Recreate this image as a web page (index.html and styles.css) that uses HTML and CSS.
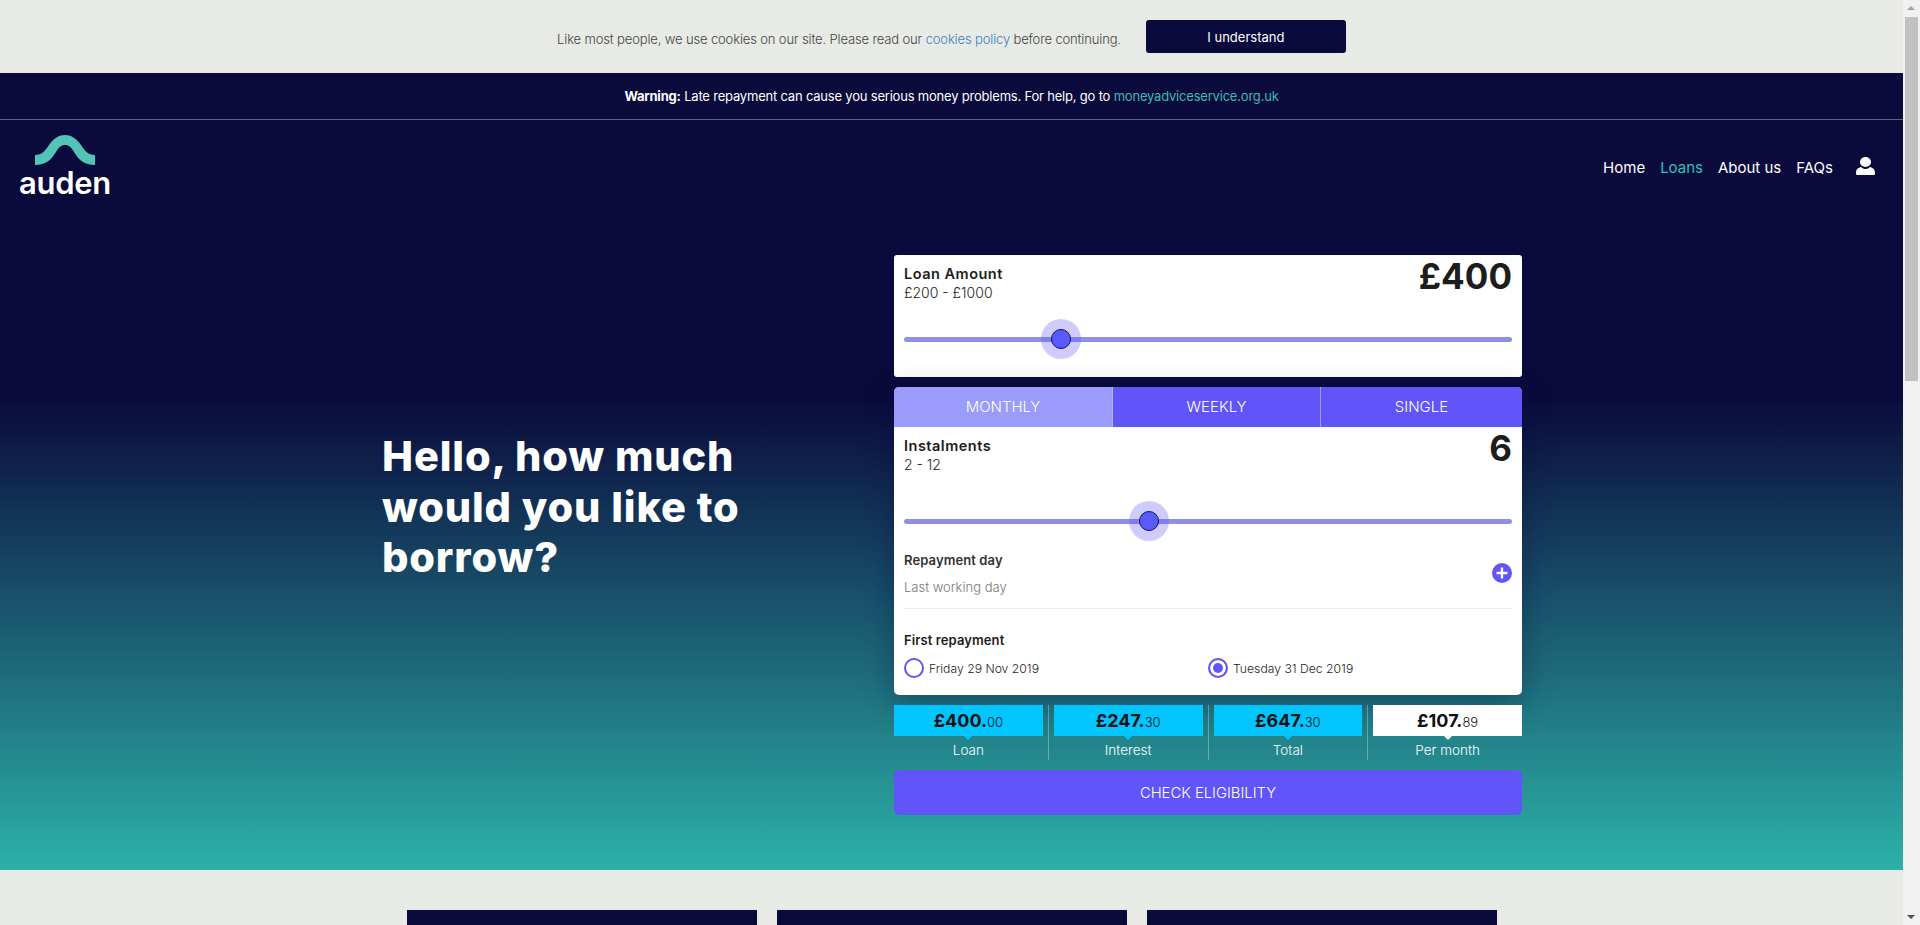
FILE: index.html
```html
<!DOCTYPE html>
<html lang="en">

<head>
    <meta charset="UTF-8">
    <meta name="viewport" content="width=device-width, initial-scale=1.0">
    <title>Auden - Loans</title>
    <link rel="stylesheet" href="styles.css">
</head>

<body>
    <div class="page">
        <!-- Cookie notice -->
        <div class="cookie-bar">
            <p class="cookie-text">Like most people, we use cookies on our site. Please read our <a class="cookie-link" href="#">cookies policy</a> before continuing.</p>
            <button class="cookie-button">I understand</button>
        </div>

        <!-- Warning strip -->
        <div class="warning-bar">
            <p class="warning-text"><strong>Warning:</strong> Late repayment can cause you serious money problems. For help, go to <a class="warning-link" href="#">moneyadviceservice.org.uk</a></p>
        </div>

        <div class="hero">
            <div class="nav">
                <a class="logo" href="#">
                    <svg class="logo-arch" viewBox="0 0 60 30" width="60" height="30">
                        <path d="M0 30V20C7 20 10 16 14 10C19 3 24 0 30 0C36 0 41 3 46 10C50 16 53 20 60 20V30C49 30 44 25 39 17C36 12 34 10 30 10C26 10 24 12 21 17C16 25 11 30 0 30Z" fill="#52c4b6" />
                    </svg>
                    <span class="logo-text">auden</span>
                </a>
                <div class="nav-links">
                    <a class="nav-link" href="#">Home</a>
                    <a class="nav-link nav-link-active" href="#">Loans</a>
                    <a class="nav-link" href="#">About us</a>
                    <a class="nav-link" href="#">FAQs</a>
                    <a class="nav-user" href="#">
                        <svg viewBox="0 0 19 18" width="19" height="18">
                            <ellipse cx="9.5" cy="5" rx="5.5" ry="5" fill="#fff" />
                            <path d="M0 15.5C0 12.5 2.5 10.5 5 10C6.5 11.5 8 12 9.5 12C11 12 12.5 11.5 14 10C16.5 10.5 19 12.5 19 15.5V16.5C19 17.5 18.5 18 17.5 18H1.5C0.5 18 0 17.5 0 16.5Z" fill="#fff" />
                        </svg>
                    </a>
                </div>
            </div>

            <div class="hero-body">
                <div class="hero-left">
                    <h1 class="hero-title">Hello, how much would you like to borrow?</h1>
                </div>

                <div class="calculator">
                    <!-- Loan amount -->
                    <div class="card card-amount">
                        <div class="field-head">
                            <div>
                                <div class="field-label">Loan Amount</div>
                                <div class="field-range">£200 - £1000</div>
                            </div>
                            <div class="field-value">£400</div>
                        </div>
                        <div class="slider">
                            <div class="track"></div>
                            <div class="thumb" style="left: 25.8%"></div>
                        </div>
                    </div>

                    <!-- Instalments -->
                    <div class="card card-plan">
                        <div class="tabs">
                            <div class="tab tab-monthly tab-active">MONTHLY</div>
                            <div class="tab tab-weekly">WEEKLY</div>
                            <div class="tab tab-single">SINGLE</div>
                        </div>
                        <div class="plan-body">
                            <div class="field-head">
                                <div>
                                    <div class="field-label">Instalments</div>
                                    <div class="field-range">2 - 12</div>
                                </div>
                                <div class="field-value">6</div>
                            </div>
                            <div class="slider slider-plan">
                                <div class="track"></div>
                                <div class="thumb" style="left: 40.3%"></div>
                            </div>
                            <div class="repayment-row">
                                <div>
                                    <div class="small-label">Repayment day</div>
                                    <div class="repayment-day">Last working day</div>
                                </div>
                                <svg class="plus" viewBox="0 0 20 20" width="20" height="20">
                                    <circle cx="10" cy="10" r="10" fill="#6155fa" />
                                    <path d="M10 4.5V15.5M4.5 10H15.5" stroke="#fff" stroke-width="2.4" />
                                </svg>
                            </div>
                            <div class="small-label first-label">First repayment</div>
                            <div class="radios">
                                <div class="radio-item">
                                    <span class="radio"></span>
                                    <span class="radio-text">Friday 29 Nov 2019</span>
                                </div>
                                <div class="radio-item">
                                    <span class="radio radio-on"></span>
                                    <span class="radio-text">Tuesday 31 Dec 2019</span>
                                </div>
                            </div>
                        </div>
                    </div>

                    <!-- Totals -->
                    <div class="summary">
                        <div class="summary-item">
                            <div class="summary-box"><b>£400.</b><small>00</small></div>
                            <div class="summary-label">Loan</div>
                        </div>
                        <div class="summary-item">
                            <div class="summary-box"><b>£247.</b><small>30</small></div>
                            <div class="summary-label">Interest</div>
                        </div>
                        <div class="summary-item">
                            <div class="summary-box"><b>£647.</b><small>30</small></div>
                            <div class="summary-label">Total</div>
                        </div>
                        <div class="summary-item summary-month">
                            <div class="summary-box"><b>£107.</b><small>89</small></div>
                            <div class="summary-label">Per month</div>
                        </div>
                    </div>

                    <button class="check-button">CHECK ELIGIBILITY</button>
                </div>
            </div>
        </div>

        <!-- Cards below the fold -->
        <div class="lower">
            <div class="lower-card"></div>
            <div class="lower-card"></div>
            <div class="lower-card"></div>
        </div>
    </div>

    <div class="scrollbar">
        <div class="arrow-up"></div>
        <div class="scroll-thumb"></div>
        <div class="arrow-down"></div>
    </div>
</body>

</html>
```

FILE: styles.css
```css
html,
body {
    margin: 0;
    height: 925px;
    overflow: hidden;
}

body {
    display: flex;
    font-family: Inter, "Noto Sans", sans-serif;
    background-color: #e8eae5;
}

a {
    text-decoration: none;
}

p {
    margin: 0;
}

.page {
    width: 1903px;
    height: 925px;
    overflow: hidden;
}

/* Cookie notice */
.cookie-bar {
    height: 73px;
    display: flex;
    align-items: center;
    justify-content: center;
    box-sizing: border-box;
    background-color: #e8eae5;
}

.cookie-text {
    font-size: 13px;
    font-weight: 300;
    color: #444;
    margin-top: 5px;
    letter-spacing: -0.14px;
}

.cookie-link {
    color: #3d7fc4;
}

.cookie-button {
    width: 200px;
    height: 33px;
    margin-left: 25px;
    border: none;
    border-radius: 3px;
    background-color: #0a0a3c;
    color: #fff;
    font-family: inherit;
    font-size: 13px;
}

/* Warning strip */
.warning-bar {
    height: 47px;
    box-sizing: border-box;
    border-bottom: 1px solid #5f5f8c;
    background-color: #0a0a3c;
    color: #fff;
    text-align: center;
    font-size: 13px;
    line-height: 46px;
}

.warning-text {
    letter-spacing: -0.2px;
}

.warning-link {
    color: #3cbcae;
}

/* Header + gradient */
.hero {
    height: 750px;
    background: linear-gradient(#0a0a3c 37%, #2cb1a8 100%);
}

.nav {
    height: 135px;
    box-sizing: border-box;
    display: flex;
    justify-content: space-between;
    align-items: flex-start;
    padding: 15px 28px 0 20px;
}

.logo {
    display: flex;
    flex-direction: column;
    align-items: center;
    width: 90px;
}

.logo-text {
    color: #fff;
    font-size: 31px;
    font-weight: 600;
    line-height: 30px;
    margin-top: 3px;
    letter-spacing: -0.3px;
}

.nav-links {
    display: flex;
    align-items: center;
    margin-top: 22px;
}

.nav-link {
    color: #fff;
    font-size: 15px;
    line-height: 22px;
    margin-right: 15px;
}

.nav-link-active {
    color: #2cc4b4;
}

.nav-user {
    display: flex;
    margin-left: 8px;
    margin-top: -4px;
}

.hero-body {
    width: 1141px;
    margin-left: 381px;
    display: flex;
}

.hero-left {
    width: 513px;
}

.hero-title {
    margin: 176px 0 0 1px;
    color: #fff;
    font-size: 41.5px;
    font-weight: 800;
    line-height: 50.5px;
    letter-spacing: 0.85px;
    width: 390px;
}

.calculator {
    width: 628px;
}

.card {
    background-color: #fff;
    border-radius: 3px;
    color: #1d1d1b;
}

.card-amount {
    height: 122px;
    padding: 10px 10px 0;
    box-sizing: border-box;
}

.card-plan {
    height: 308px;
    margin-top: 10px;
    border-radius: 5px;
    overflow: hidden;
    box-shadow: 0 8px 30px rgba(10, 10, 60, 0.35);
}

.field-head {
    display: flex;
    justify-content: space-between;
    height: 55px;
}

.field-label {
    font-size: 14.5px;
    font-weight: 600;
    line-height: 18px;
    letter-spacing: 0.5px;
}

.field-range {
    font-size: 14px;
    font-weight: 300;
    line-height: 20px;
}

.field-value {
    font-size: 35px;
    font-weight: 700;
    line-height: 22px;
}

/* Slider */
.slider {
    position: relative;
    height: 40px;
}

.slider-plan {
    margin-top: 10px;
}

.track {
    position: absolute;
    top: 17px;
    left: 0;
    right: 0;
    height: 5px;
    border-radius: 3px;
    background-color: #8f8fe8;
}

.thumb {
    position: absolute;
    top: 9px;
    width: 20px;
    height: 20px;
    margin-left: -10px;
    box-sizing: border-box;
    border: 1px solid #10107a;
    border-radius: 50%;
    background-color: #5a5afa;
    box-shadow: 0 0 0 10px rgba(97, 85, 250, 0.3);
}

/* Tabs */
.tabs {
    display: flex;
    height: 40px;
    background-color: #6155fa;
    color: #fff;
    font-size: 15px;
    font-weight: 300;
    line-height: 40px;
    text-align: center;
}

.tab-monthly {
    width: 218px;
    border-right: 1px solid #b3b3fb;
}

.tab-weekly {
    width: 207px;
    border-right: 1px solid #9b9bfb;
}

.tab-single {
    flex: 1;
}

.tab-active {
    background-color: #9b9bfb;
}

.plan-body {
    padding: 10px 10px 0;
}

.repayment-row {
    display: flex;
    justify-content: space-between;
    align-items: center;
    height: 59px;
    margin-top: 2px;
    padding-bottom: 5px;
    border-bottom: 1px solid #eee;
}

.plus {
    margin-top: -1px;
}

.small-label {
    font-size: 13px;
    font-weight: 600;
    line-height: 18px;
    color: #333;
    letter-spacing: 0.1px;
}

.repayment-day {
    font-size: 13px;
    font-weight: 300;
    line-height: 18px;
    color: #777;
    margin-top: 9px;
}

.first-label {
    margin-top: 22px;
    color: #1d1d1b;
}

.radios {
    display: flex;
    margin-top: 9px;
}

.radio-item {
    width: 304px;
    display: flex;
    align-items: center;
}

.radio {
    width: 20px;
    height: 20px;
    box-sizing: border-box;
    border: 2px solid #6155fa;
    border-radius: 50%;
    margin-right: 5px;
}

.radio-on {
    background-color: #6155fa;
    box-shadow: inset 0 0 0 3px #fff;
}

.radio-text {
    font-size: 12.2px;
    font-weight: 300;
}

/* Totals */
.summary {
    display: flex;
    margin-top: 10px;
    height: 55px;
}

.summary-item {
    flex: 1;
    padding-right: 5px;
    margin-right: 5px;
    border-right: 1px solid rgba(255, 255, 255, 0.3);
}

.summary-month {
    padding-right: 0;
    margin-right: 0;
    border-right: none;
}

.summary-box {
    position: relative;
    height: 31px;
    background-color: #00c5ff;
    color: #111;
    text-align: center;
    line-height: 31px;
    font-size: 18px;
}

.summary-box::after {
    content: "";
    position: absolute;
    left: 50%;
    bottom: -4px;
    margin-left: -4px;
    border-left: 4px solid transparent;
    border-right: 4px solid transparent;
    border-top: 4px solid #00c5ff;
}

.summary-box small {
    font-size: 13px;
    font-weight: 300;
}

.summary-month .summary-box {
    background-color: #fff;
}

.summary-month .summary-box::after {
    border-top-color: #fff;
}

.summary-label {
    color: #fff;
    font-size: 13.5px;
    font-weight: 300;
    line-height: 18px;
    margin-top: 5px;
    text-align: center;
}

.check-button {
    display: block;
    width: 100%;
    height: 45px;
    margin-top: 10px;
    border: none;
    border-radius: 5px;
    background-color: #6155fa;
    color: #fff;
    font-family: inherit;
    font-size: 14.8px;
    font-weight: 300;
}

/* Lower section */
.lower {
    display: flex;
    justify-content: center;
    gap: 20px;
    padding-top: 40px;
}

.lower-card {
    width: 350px;
    height: 200px;
    background-color: #0a0a3c;
}

/* Scrollbar drawn by hand */
.scrollbar {
    position: relative;
    width: 17px;
    height: 925px;
    background-color: #f1f1f1;
}

.scroll-thumb {
    position: absolute;
    top: 17px;
    left: 2px;
    width: 13px;
    height: 364px;
    background-color: #c1c1c1;
}

.arrow-up {
    position: absolute;
    top: 6px;
    left: 4px;
    border-left: 4px solid transparent;
    border-right: 4px solid transparent;
    border-bottom: 4px solid #a3a3a3;
}

.arrow-down {
    position: absolute;
    bottom: 6px;
    left: 4px;
    border-left: 4px solid transparent;
    border-right: 4px solid transparent;
    border-top: 4px solid #505050;
}
```
